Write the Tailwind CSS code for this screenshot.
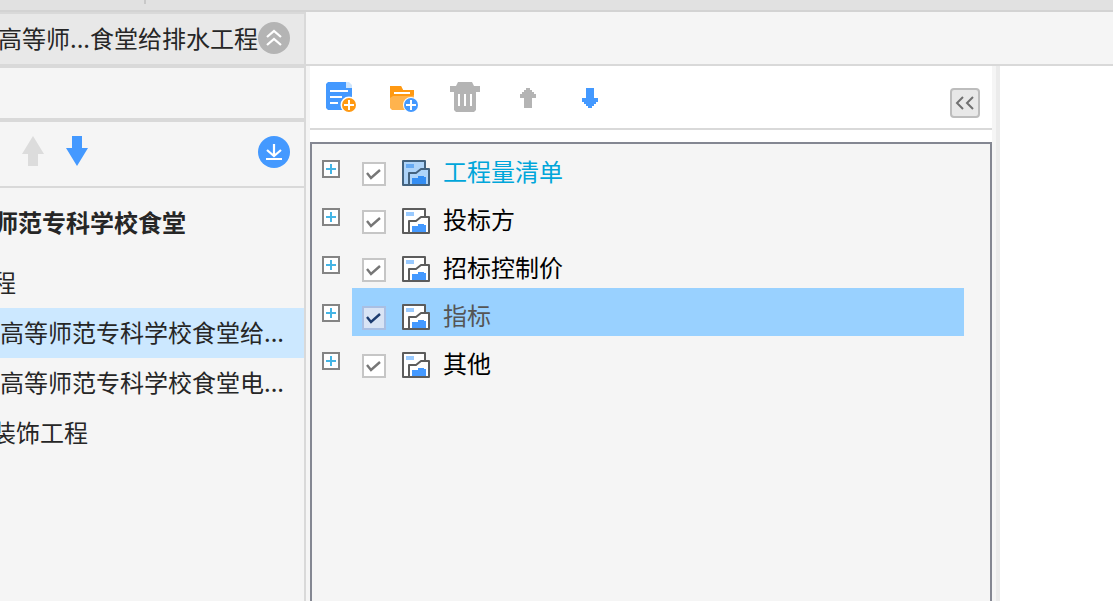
<!DOCTYPE html>
<html lang="zh-CN">
<head>
<meta charset="utf-8">
<title>工程量清单</title>
<script src="https://cdn.jsdelivr.net/npm/@tailwindcss/browser@4"></script>
</head>
<body class="flex h-screen flex-col overflow-hidden bg-[#f5f5f5] font-['Noto_Sans_CJK_SC','Noto_Sans',sans-serif] text-2xl leading-6 text-[#262626]">
<svg class="hidden">
  <symbol id="plus" viewBox="0 0 18 18"><rect x="1" y="1" width="16" height="16" fill="#fff" stroke="#848484" stroke-width="2"/><path d="M4 9h10M9 4v10" stroke="#45b5e5" stroke-width="2"/></symbol>
  <symbol id="check" viewBox="0 0 24 24"><path d="M5 11l4 5L18 8" fill="none" stroke="currentColor" stroke-width="2.4"/></symbol>
  <symbol id="report" viewBox="0 0 28 26"><path d="M1 1h22v8h4v16H1z" fill="currentColor"/><path d="M23 9V1H1v24h26V9h-8l-5 4H7v12" fill="none" stroke="var(--line)" stroke-width="2" stroke-linejoin="round"/><path d="M4 4h8v4H4z" fill="var(--bar)"/><path d="M10 18h6v-2h6v1h2v7H10z" fill="var(--fill)"/></symbol>
  <symbol id="up" viewBox="0 0 16 20" shape-rendering="crispEdges"><path d="M6 0h4v2h2v2h2v2h2v4h-4v10H4V10H0V6h2V4h2V2h2z" fill="currentColor"/></symbol>
</svg>

<div class="h-3 shrink-0 border-b-2 border-[#d3d3d3] bg-[#e1e1e1]"><div class="ml-36 h-1 w-0.5 bg-[#c8c8c8]"></div></div>

<div class="flex min-h-0 flex-1">
  <aside class="flex w-[306px] shrink-0 flex-col overflow-hidden border-r-2 border-[#d9d9d9]">
    <header class="flex h-14 shrink-0 items-center justify-end border-t-2 border-b-4 border-[#d9d9d9] bg-[#e8e8e8] pr-3.5 pb-0.5">
      <h1 class="shrink-0 whitespace-nowrap">高等师...食堂给排水工程</h1>
      <button aria-label="收起" class="size-8 shrink-0"><svg viewBox="0 0 32 32" class="size-8"><circle cx="16" cy="16" r="16" fill="#b4b4b4"/><path d="M9 15l7-6 7 6M9 23l7-6 7 6" fill="none" stroke="#fff" stroke-width="2.3"/></svg></button>
    </header>
    <div class="h-[54px] shrink-0 border-b-4 border-[#d9d9d9]"></div>
    <div class="flex h-[66px] shrink-0 items-start border-b-2 border-[#d9d9d9] pt-3.5 pr-3.5 pl-[22px]">
      <button aria-label="上移" class="h-[30px] w-[22px]"><svg viewBox="0 0 22 30" class="h-[30px] w-[22px]"><path d="M11 0l11 18h-6v12H6V18H0z" fill="#dcdcdc"/></svg></button>
      <button aria-label="下移" class="ml-[22px] h-[30px] w-[22px]"><svg viewBox="0 0 22 30" class="h-[30px] w-[22px]"><path d="M6 0h10v12h6L11 30 0 12h6z" fill="#4499ff"/></svg></button>
      <button aria-label="下载" class="ml-auto size-8"><svg viewBox="0 0 32 32" class="size-8"><circle cx="16" cy="16" r="16" fill="#4499ff"/><path d="M16 8v12M9 14l7 6 7-6" fill="none" stroke="#fff" stroke-width="2.2"/><path d="M8 23h16" stroke="#fff" stroke-width="2"/></svg></button>
    </div>
    <ul class="whitespace-nowrap">
      <li class="-ml-1.5 flex h-[70px] items-center pb-0.5 font-bold">师范专科学校食堂</li>
      <li class="-ml-2 flex h-[50px] items-center pb-0.5">程</li>
      <li class="flex h-[50px] items-center bg-[#cce8ff] pb-0.5">高等师范专科学校食堂给...</li>
      <li class="flex h-[50px] items-center pb-0.5">高等师范专科学校食堂电...</li>
      <li class="-ml-2 flex h-[50px] items-center pb-0.5">装饰工程</li>
    </ul>
  </aside>

  <div class="flex min-w-0 flex-1 flex-col">
    <div class="h-[54px] shrink-0 border-b-2 border-[#d9d9d9]"></div>
    <div class="flex min-h-0 flex-1">
      <main class="ml-1 flex w-[682px] shrink-0 flex-col bg-white">
        <div class="flex h-16 shrink-0 items-start border-b-2 border-[#d9d9d9] pt-4 pr-3 pl-4">
          <button aria-label="新建报表" class="size-[30px]"><svg viewBox="0 0 30 30" class="size-[30px]"><path d="M2 0h18l6 6v22H2l-2-2V2z" fill="#4499ff"/><path d="M20 0h3l3 3v3h-6z" fill="#cfe5fc"/><path d="M4 9h18M4 15h12M4 21h8" stroke="#fff" stroke-width="2"/><circle cx="23" cy="23" r="8.5" fill="#fff"/><circle cx="23" cy="23" r="7" fill="#ff9912"/><path d="M18 23h10M23 18v10" stroke="#fff" stroke-width="2"/></svg></button>
          <button aria-label="新建文件夹" class="ml-[34px] h-[30px] w-7"><svg viewBox="0 0 28 30" class="h-[30px] w-7"><path d="M0 4h11l2 4h11v20H2l-2-2z" fill="#ffb34d"/><path d="M0 4h11l2 4h11v5l-2 1H3l-3 2z" fill="#ff9912"/><path d="M4 11h16" stroke="#fff" stroke-width="2"/><circle cx="21" cy="23" r="8" fill="#fff"/><circle cx="21" cy="23" r="7" fill="#4499ff"/><path d="M16 23h10M21 18v10" stroke="#fff" stroke-width="2"/></svg></button>
          <button aria-label="删除" class="ml-8 size-[30px]"><svg viewBox="0 0 30 30" class="size-[30px]"><path d="M8 0h14l2 4h6v6h-4v18l-2 2H6l-2-2V10H0V4h6z" fill="#b4b4b4"/><path d="M9 12v12M15 12v12M21 12v12" stroke="#fff" stroke-width="2"/></svg></button>
          <button aria-label="上移" class="mt-1.5 ml-10 h-5 w-4 text-[#b4b4b4]"><svg class="h-5 w-4"><use href="#up"/></svg></button>
          <button aria-label="下移" class="mt-1.5 ml-[46px] h-5 w-4 rotate-180 text-[#4499ff]"><svg class="h-5 w-4"><use href="#up"/></svg></button>
          <button aria-label="折叠面板" class="mt-1.5 ml-auto size-[30px] rounded border-2 border-[#bdbdbd] bg-[#e8e8e8]"><svg viewBox="0 0 26 26" class="size-[26px]"><path d="M11 7l-6 6 6 6M21 7l-6 6 6 6" fill="none" stroke="#707070" stroke-width="2"/></svg></button>
        </div>
        <ul class="mt-3 flex-1 border-2 border-b-0 border-[#848792] bg-[#f5f5f5] pr-[26px] pl-2.5 text-black">
          <li class="flex h-12 items-start">
            <button aria-label="展开工程量清单" class="mt-4 size-[18px] shrink-0"><svg class="size-[18px]"><use href="#plus"/></svg></button>
            <label class="ml-3 flex h-12 flex-1 items-start pl-2.5">
              <span class="mt-[18px] grid size-6 shrink-0 text-[#777777]"><input type="checkbox" checked class="col-start-1 row-start-1 size-6 appearance-none border-2 border-[#c6c6c6] bg-white"><svg class="pointer-events-none col-start-1 row-start-1 size-6"><use href="#check"/></svg></span>
              <svg class="mt-4 ml-4 h-[26px] w-7 shrink-0 text-[#aed4f9] [--bar:#66aaf3] [--fill:#338df3] [--line:#44637f]"><use href="#report"/></svg>
              <span class="mt-[15px] ml-[13px] text-[#00a6da]">工程量清单</span>
            </label>
          </li>
          <li class="flex h-12 items-start">
            <button aria-label="展开投标方" class="mt-4 size-[18px] shrink-0"><svg class="size-[18px]"><use href="#plus"/></svg></button>
            <label class="ml-3 flex h-12 flex-1 items-start pl-2.5">
              <span class="mt-[18px] grid size-6 shrink-0 text-[#777777]"><input type="checkbox" checked class="col-start-1 row-start-1 size-6 appearance-none border-2 border-[#c6c6c6] bg-white"><svg class="pointer-events-none col-start-1 row-start-1 size-6"><use href="#check"/></svg></span>
              <svg class="mt-4 ml-4 h-[26px] w-7 shrink-0 text-white [--bar:#99caff] [--fill:#4499ff] [--line:#5c5c5c]"><use href="#report"/></svg>
              <span class="mt-[15px] ml-[13px]">投标方</span>
            </label>
          </li>
          <li class="flex h-12 items-start">
            <button aria-label="展开招标控制价" class="mt-4 size-[18px] shrink-0"><svg class="size-[18px]"><use href="#plus"/></svg></button>
            <label class="ml-3 flex h-12 flex-1 items-start pl-2.5">
              <span class="mt-[18px] grid size-6 shrink-0 text-[#777777]"><input type="checkbox" checked class="col-start-1 row-start-1 size-6 appearance-none border-2 border-[#c6c6c6] bg-white"><svg class="pointer-events-none col-start-1 row-start-1 size-6"><use href="#check"/></svg></span>
              <svg class="mt-4 ml-4 h-[26px] w-7 shrink-0 text-white [--bar:#99caff] [--fill:#4499ff] [--line:#5c5c5c]"><use href="#report"/></svg>
              <span class="mt-[15px] ml-[13px]">招标控制价</span>
            </label>
          </li>
          <li class="flex h-12 items-start">
            <button aria-label="展开指标" class="mt-4 size-[18px] shrink-0"><svg class="size-[18px]"><use href="#plus"/></svg></button>
            <label class="ml-3 flex h-12 flex-1 items-start bg-[#99d1ff] pl-2.5">
              <span class="mt-[18px] grid size-6 shrink-0 text-[#1d3c70]"><input type="checkbox" checked class="col-start-1 row-start-1 size-6 appearance-none border-2 border-[#a9bfe3] bg-[#d9e4f5]"><svg class="pointer-events-none col-start-1 row-start-1 size-6"><use href="#check"/></svg></span>
              <svg class="mt-4 ml-4 h-[26px] w-7 shrink-0 text-white [--bar:#99caff] [--fill:#4499ff] [--line:#5c5c5c]"><use href="#report"/></svg>
              <span class="mt-[15px] ml-[13px] text-[#555555]">指标</span>
            </label>
          </li>
          <li class="flex h-12 items-start">
            <button aria-label="展开其他" class="mt-4 size-[18px] shrink-0"><svg class="size-[18px]"><use href="#plus"/></svg></button>
            <label class="ml-3 flex h-12 flex-1 items-start pl-2.5">
              <span class="mt-[18px] grid size-6 shrink-0 text-[#777777]"><input type="checkbox" checked class="col-start-1 row-start-1 size-6 appearance-none border-2 border-[#c6c6c6] bg-white"><svg class="pointer-events-none col-start-1 row-start-1 size-6"><use href="#check"/></svg></span>
              <svg class="mt-4 ml-4 h-[26px] w-7 shrink-0 text-white [--bar:#99caff] [--fill:#4499ff] [--line:#5c5c5c]"><use href="#report"/></svg>
              <span class="mt-[15px] ml-[13px]">其他</span>
            </label>
          </li>
        </ul>
      </main>
      <section class="ml-1 flex-1 border-l-4 border-[#ebebeb] bg-white"></section>
    </div>
  </div>
</div>
</body>
</html>
